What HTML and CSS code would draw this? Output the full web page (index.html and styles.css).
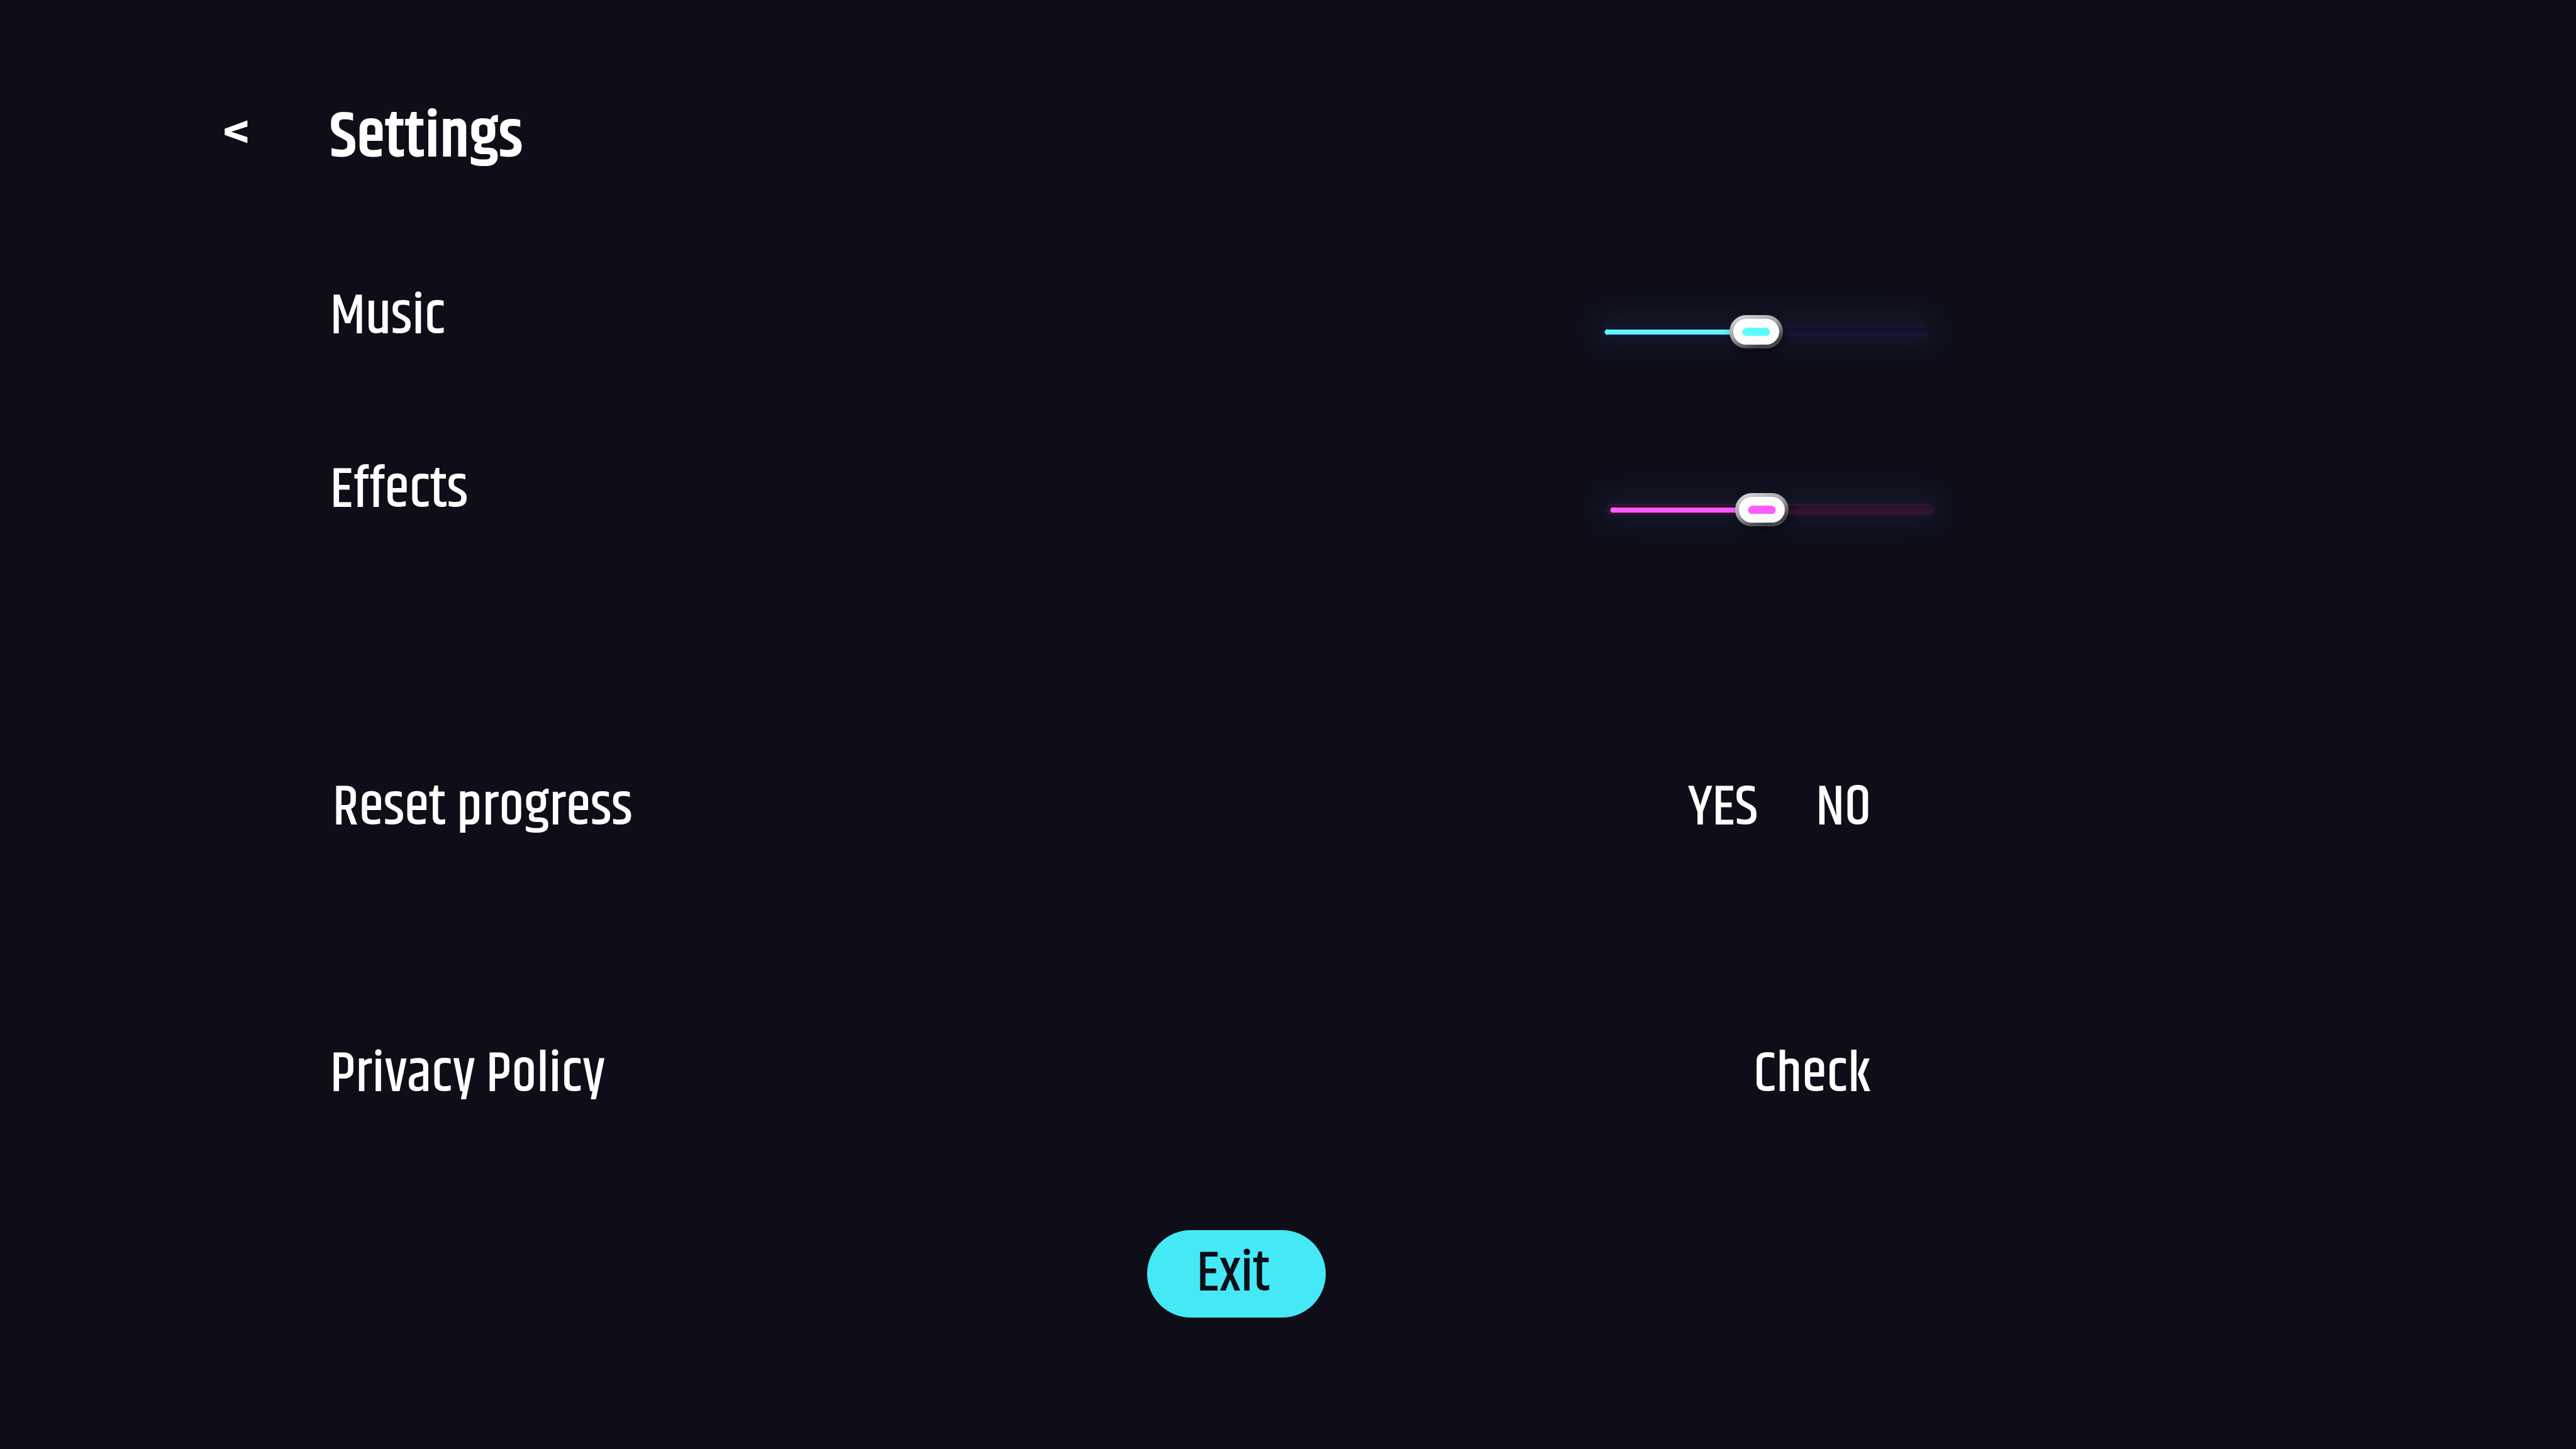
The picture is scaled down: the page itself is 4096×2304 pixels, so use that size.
FILE: index.html
```html
<!DOCTYPE html>
<html lang="en">
<head>
  <meta charset="utf-8">
  <meta name="viewport" content="width=device-width, initial-scale=1">
  <title>Settings</title>
  <link rel="stylesheet" href="styles.css">
</head>
<body>
  <main class="page">
    <header class="header">
      <button class="text-button back" type="button" aria-label="Back">&lt;</button>
      <h1 class="title">Settings</h1>
    </header>

    <section class="settings">
      <div class="row row-music">
        <label class="label" for="music">Music</label>
        <input class="slider slider-music" id="music" type="range" min="0" max="100" value="47">
      </div>
      <div class="row row-effects">
        <label class="label" for="effects">Effects</label>
        <input class="slider slider-effects" id="effects" type="range" min="0" max="100" value="47">
      </div>
      <div class="row row-reset">
        <span class="label" id="reset-label">Reset progress</span>
        <div class="actions" role="group" aria-labelledby="reset-label">
          <button class="text-button" type="button">YES</button>
          <button class="text-button" type="button">NO</button>
        </div>
      </div>
      <div class="row row-privacy">
        <span class="label">Privacy Policy</span>
        <div class="actions">
          <a class="text-button" href="#privacy">Check</a>
        </div>
      </div>
    </section>

    <footer class="footer">
      <button class="exit" type="button">Exit</button>
    </footer>
  </main>
</body>
</html>
```
FILE: styles.css
```css
* {
  box-sizing: border-box;
}

body {
  margin: 0;
  background: #0e0e19;
  color: #ffffff;
  font-family: "Khand", "Roboto Condensed", sans-serif;
  font-size: 90px;
  font-weight: 500;
  line-height: 100px;
}

.page {
  min-height: 100vh;
  padding-top: 163px;
}

.header {
  display: flex;
  align-items: center;
  padding-left: 354px;
}

.title {
  margin: 0;
  font-size: 103px;
  font-weight: 600;
  line-height: 100px;
}

.text-button {
  padding: 0;
  border: 0;
  background: none;
  color: inherit;
  font: inherit;
  text-decoration: none;
  cursor: pointer;
}

.back {
  width: 170px;
  padding-bottom: 14px;
  font-weight: 600;
  text-align: left;
}

.settings {
  padding-right: calc(25% - 4px);
  padding-left: 525px;
}

.row {
  display: flex;
  align-items: flex-end;
  justify-content: space-between;
}

.row-music {
  margin-top: 177px;
  padding-right: 9px;
}

.row-effects {
  margin-top: 176px;
}

.row-effects .label {
  padding-bottom: 7px;
}

.row-reset {
  margin-top: 398px;
  padding-left: 4px;
}

.row-privacy {
  margin-top: 324px;
}

.actions {
  display: flex;
  gap: 92px;
  padding-right: 101px;
}

/* Sliders */

.slider {
  --fill-top: #5cfcfa;
  --fill-bottom: #62eefa;
  --edge: #15173a;
  --groove-top: #0e1022;
  --groove-bottom: #171938;
  --edge-bottom: #12142e;
  width: 522px;
  height: 53px;
  margin: 0;
  appearance: none;
  background: none;
  cursor: pointer;
}

.slider-effects {
  --fill-top: #ff5afc;
  --fill-bottom: #ff5afc;
  --edge: #371533;
  --groove-top: #240f22;
  --groove-bottom: #38143a;
  --edge-bottom: #2b112a;
}

.slider::-webkit-slider-runnable-track {
  height: 19px;
  border-radius: 10px;
  background:
    radial-gradient(circle at 11px 10px, var(--fill-top) 4px, transparent 5px) 0 0 / 11px 19px no-repeat,
    linear-gradient(var(--fill-top), var(--fill-bottom)) 11px 6px / 220px 8px no-repeat,
    linear-gradient(var(--edge) 3px, var(--groove-top) 3px, var(--groove-bottom) 16px, var(--edge-bottom) 16px);
  box-shadow: 0 -3px 44px 10px #171c31;
}

.slider::-webkit-slider-thumb {
  width: 85px;
  height: 53px;
  margin-top: -17px;
  appearance: none;
  border: 6px solid transparent;
  border-radius: 27px;
  background:
    radial-gradient(circle at 21px 21px, var(--fill-top) 6px, transparent 7px) padding-box 0 0 / 22px 41px no-repeat,
    radial-gradient(circle at 0 21px, var(--fill-top) 6px, transparent 7px) padding-box 52px 0 / 21px 41px no-repeat,
    linear-gradient(var(--fill-top), var(--fill-top)) padding-box 21px 14px / 31px 13px no-repeat,
    linear-gradient(#ffffff, #fafafa) padding-box,
    linear-gradient(160deg, #d8d8da 5%, #a0a0a2 45%, #404040 80%, #5a5a5a) border-box;
  box-shadow: 4px 8px 16px rgba(0, 0, 0, 0.45);
}

/* Exit */

.footer {
  display: flex;
  justify-content: center;
  margin-top: 197px;
  padding-right: 164px;
}

.exit {
  padding: 20px 89px 19px 79px;
  border: 0;
  border-radius: 70px;
  background: #45e8f5;
  color: #0e0e19;
  font: inherit;
  cursor: pointer;
}
```
